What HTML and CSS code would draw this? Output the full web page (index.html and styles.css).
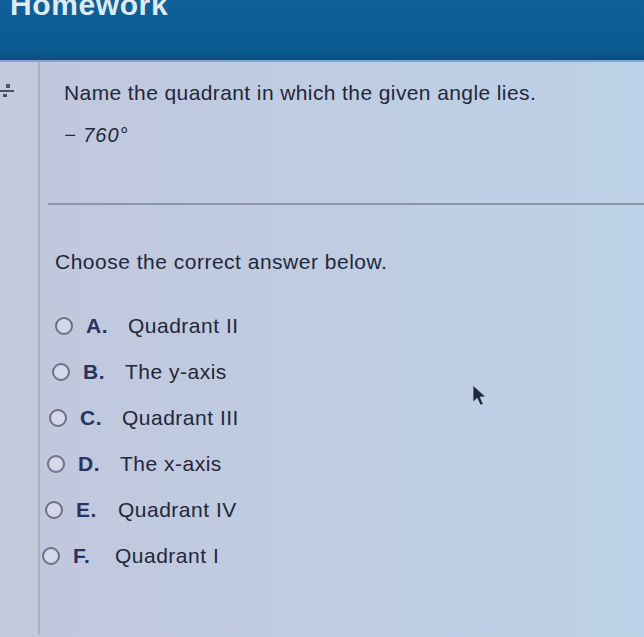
FILE: index.html
```html
<!DOCTYPE html>
<html>
<head>
<meta charset="utf-8">
<link rel="stylesheet" href="styles.css">
</head>
<body>
<header class="topbar">
  <h1 class="title">Homework</h1>
</header>
<div class="page">
  <aside class="side">
    <div class="side-icon"><span class="frac-top"></span><span class="frac-bar"></span><span class="frac-bot"></span></div>
  </aside>
  <main class="content">
    <p class="question">Name the quadrant in which the given angle lies.</p>
    <p class="angle">&minus; 760&deg;</p>
    <div class="rule"></div>
    <p class="prompt">Choose the correct answer below.</p>
    <ul class="options">
      <li class="opt o1"><span class="radio"></span><span class="letter">A.</span><span class="label">Quadrant II</span></li>
      <li class="opt o2"><span class="radio"></span><span class="letter">B.</span><span class="label">The y-axis</span></li>
      <li class="opt o3"><span class="radio"></span><span class="letter">C.</span><span class="label">Quadrant III</span></li>
      <li class="opt o4"><span class="radio"></span><span class="letter">D.</span><span class="label">The x-axis</span></li>
      <li class="opt o5"><span class="radio"></span><span class="letter">E.</span><span class="label">Quadrant IV</span></li>
      <li class="opt o6"><span class="radio"></span><span class="letter">F.</span><span class="label">Quadrant I</span></li>
    </ul>
    <svg class="cursor" width="16" height="22" viewBox="0 0 14 20"><path d="M1 1 L1 15 L4.5 11.5 L7.5 18 L9.5 17 L6.7 10.7 L11.5 10.5 Z" fill="#1f2a3a"/></svg>
  </main>
</div>
</body>
</html>
```
FILE: styles.css
```css
* { box-sizing: border-box; }
html, body { margin: 0; padding: 0; }
body {
  width: 644px;
  height: 637px;
  overflow: hidden;
  font-family: "Liberation Sans", Arial, sans-serif;
  background: linear-gradient(to right, #c1c7dc 0%, #bfcde2 55%, #bdd2e8 100%);
  color: #23273a;
}
.topbar {
  height: 62px;
  background: linear-gradient(to bottom, #0e6098 0%, #0b5b93 80%, #0a4f80 100%);
  overflow: hidden;
  border-bottom: 2px solid #7fa6cf;
}
.title {
  margin: -12px 0 0 10px;
  font-size: 30px;
  font-weight: bold;
  color: #dfeaf5;
  line-height: 34px;
  letter-spacing: 0.6px;
}
.page {
  display: flex;
  height: 573px;
}
.side {
  width: 40px;
  flex: none;
  border-right: 2px solid #a9b0c4;
  background: #c4c9dc;
  padding-top: 22px;
}
.side-icon {
  display: flex;
  flex-direction: column;
  align-items: flex-start;
  gap: 2px;
}
.frac-top { width: 4px; height: 4px; background: #4a5060; margin-left: 6px; }
.frac-bar { width: 14px; height: 2px; background: #4a5060; }
.frac-bot { width: 4px; height: 3px; background: #4a5060; margin-left: 3px; }
.content {
  flex: 1;
  position: relative;
  padding-left: 24px;
}
.question {
  margin: 19px 0 0 0;
  font-size: 21px;
  letter-spacing: 0.4px;
  line-height: 24px;
}
.angle {
  margin: 18px 0 0 0;
  font-size: 20px;
  font-style: italic;
  letter-spacing: 1px;
  line-height: 24px;
}
.rule {
  height: 2px;
  background: #8d97ab;
  margin: 56px 0 0 -16px;
}
.prompt {
  margin: 45px 0 0 -9px;
  font-size: 21px;
  letter-spacing: 0.5px;
  line-height: 24px;
}
.options {
  list-style: none;
  margin: 40px 0 0 0;
  padding: 0;
  display: flex;
  flex-direction: column;
  gap: 22px;
}
.opt {
  display: flex;
  align-items: center;
  height: 24px;
  font-size: 21px;
  letter-spacing: 0.5px;
}
.o1 { margin-left: -9px; }
.o2 { margin-left: -12px; }
.o3 { margin-left: -15px; }
.o4 { margin-left: -17px; }
.o5 { margin-left: -19px; }
.o6 { margin-left: -22px; }
.radio {
  width: 18px;
  height: 18px;
  border: 2px solid #6c7283;
  border-radius: 50%;
  background: #d3d9e8;
  flex: none;
}
.letter {
  font-weight: bold;
  color: #2a3163;
  margin-left: 13px;
  width: 42px;
  flex: none;
}
.label { color: #23273a; }
.cursor {
  position: absolute;
  left: 432px;
  top: 323px;
}
```
